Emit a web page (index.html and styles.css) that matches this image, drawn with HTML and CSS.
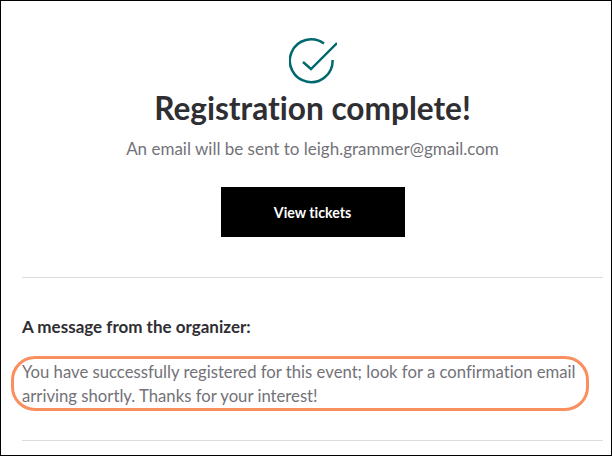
FILE: index.html
```html
<!DOCTYPE html>
<html lang="en">
<head>
  <meta charset="UTF-8">
  <title>Registration complete</title>
  <link rel="stylesheet" href="styles.css">
</head>
<body>
  <div class="marco">
    <!-- confirmacion -->
    <section class="confirmacion">
      <svg class="check" width="48" height="48" viewBox="0 0 48 48" fill="none" stroke="#00696f" aria-hidden="true">
        <path d="M35 5.6A21.4 21.4 0 1 0 43.6 22" stroke-width="2.5"/>
        <path d="M14 24l8 7L48 5" stroke-width="2.4"/>
      </svg>
      <h1>Registration complete!</h1>
      <p class="aviso">An email will be sent to leigh.grammer@gmail.com</p>
      <a class="boton" href="#">View tickets</a>
    </section>

    <hr>

    <!-- mensaje del organizador -->
    <section class="organizador">
      <h2>A message from the organizer:</h2>
      <p class="mensaje">You have successfully registered for this event; look for a confirmation email arriving shortly. Thanks for your interest!</p>
    </section>

    <hr>
  </div>
</body>
</html>
```

FILE: styles.css
```css
html,
body {
  margin: 0;
  height: 100%;
}

body {
  background-color: white;
  font-family: "Lato", "Liberation Sans", sans-serif;
  font-variant-ligatures: none;
}

.marco {
  box-sizing: border-box;
  height: 456px;
  overflow: hidden;
  border: 1px solid black;
  padding: 0 8px 0 21px;
}

.confirmacion {
  display: flex;
  flex-direction: column;
  align-items: center;
  padding-top: 37px;
}

.check {
  display: block;
}

h1 {
  margin: 4px 0 0;
  font-size: 31.6px;
  line-height: 36px;
  font-weight: 700;
  color: #2f2e33;
}

.aviso {
  margin: 11px 0 0;
  font-size: 17px;
  line-height: 24px;
  color: #737278;
}

.boton {
  display: flex;
  align-items: center;
  justify-content: center;
  width: 184px;
  height: 50px;
  margin-top: 26px;
  background-color: black;
  color: white;
  font-size: 14.2px;
  font-weight: 700;
  text-decoration: none;
}

hr {
  margin: 0;
  border: none;
  border-top: 1px solid #dcdcdf;
}

.confirmacion + hr {
  margin-top: 40px;
}

.organizador {
  padding-top: 38px;
  padding-bottom: 29px;
}

h2 {
  margin: 0;
  font-size: 17px;
  line-height: 22px;
  font-weight: 700;
  color: #2f2e33;
}

.mensaje {
  margin: 18px 0 0 -11px;
  width: 578px;
  box-sizing: border-box;
  border: 3px solid #f98e5e;
  border-radius: 24px;
  padding: 1px 8px 0;
  font-size: 16.7px;
  line-height: 24px;
  color: #737278;
}
```
